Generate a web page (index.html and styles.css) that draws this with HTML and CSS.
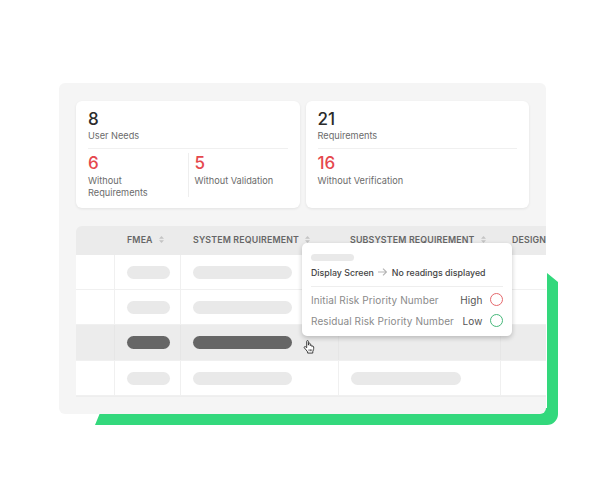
FILE: index.html
```html
<!DOCTYPE html>
<html lang="en">
<head>
    <meta charset="UTF-8">
    <title>Traceability</title>
    <link rel="stylesheet" href="styles.css">
</head>
<body>
    <div class="stage">
        <svg class="accent" width="463" height="153" viewBox="0 0 463 153">
            <path d="M452 0 L463 9 V141 A11 11 0 0 1 452 152 H0 L7 135 H452 Z" fill="#33d87c"/>
        </svg>

        <div class="panel">
            <div class="cards">
                <div class="card">
                    <div class="num">8</div>
                    <div class="label">User Needs</div>
                    <div class="split">
                        <div class="part part-first">
                            <div class="num red">6</div>
                            <div class="label">Without<br>Requirements</div>
                        </div>
                        <div class="part part-second">
                            <div class="num red">5</div>
                            <div class="label">Without Validation</div>
                        </div>
                    </div>
                </div>
                <div class="card">
                    <div class="num">21</div>
                    <div class="label">Requirements</div>
                    <div class="split">
                        <div class="part">
                            <div class="num red">16</div>
                            <div class="label">Without Verification</div>
                        </div>
                    </div>
                </div>
            </div>

            <div class="table">
                <div class="row head">
                    <div class="cell"></div>
                    <div class="cell">FMEA <svg class="sort" width="5" height="7" viewBox="0 0 5 7"><path d="M2.500 0 L5 2.700 H0 Z M2.500 7 L0 4.300 H5 Z"/></svg></div>
                    <div class="cell">SYSTEM REQUIREMENT <svg class="sort" width="5" height="7" viewBox="0 0 5 7"><path d="M2.500 0 L5 2.700 H0 Z M2.500 7 L0 4.300 H5 Z"/></svg></div>
                    <div class="cell">SUBSYSTEM REQUIREMENT <svg class="sort" width="5" height="7" viewBox="0 0 5 7"><path d="M2.500 0 L5 2.700 H0 Z M2.500 7 L0 4.300 H5 Z"/></svg></div>
                    <div class="cell">DESIGN</div>
                </div>
                <div class="row">
                    <div class="cell"></div>
                    <div class="cell"><span class="pill pill-short"></span></div>
                    <div class="cell"><span class="pill pill-long"></span></div>
                    <div class="cell"></div>
                    <div class="cell"></div>
                </div>
                <div class="row">
                    <div class="cell"></div>
                    <div class="cell"><span class="pill pill-short"></span></div>
                    <div class="cell"><span class="pill pill-long"></span></div>
                    <div class="cell"></div>
                    <div class="cell"></div>
                </div>
                <div class="row active">
                    <div class="cell"></div>
                    <div class="cell"><span class="pill pill-short"></span></div>
                    <div class="cell"><span class="pill pill-long"></span></div>
                    <div class="cell"></div>
                    <div class="cell"></div>
                </div>
                <div class="row">
                    <div class="cell"></div>
                    <div class="cell"><span class="pill pill-short"></span></div>
                    <div class="cell"><span class="pill pill-long"></span></div>
                    <div class="cell"><span class="pill pill-wide"></span></div>
                    <div class="cell"></div>
                </div>
            </div>

            <div class="tip">
                <div class="tip-bar"></div>
                <div class="tip-title">
                    <span>Display Screen</span>
                    <svg class="arrow" width="9" height="8" viewBox="0 0 9 8"><path d="M0 4 H8.500 M5 0.600 L8.500 4 L5 7.400" fill="none" stroke="#b5b5b5" stroke-width="1.200"/></svg>
                    <span>No readings displayed</span>
                </div>
                <div class="tip-line">
                    <span class="tip-name">Initial Risk Priority Number</span>
                    <span class="tip-value">High</span>
                    <span class="dot dot-red"></span>
                </div>
                <div class="tip-line">
                    <span class="tip-name">Residual Risk Priority Number</span>
                    <span class="tip-value">Low</span>
                    <span class="dot dot-green"></span>
                </div>
            </div>

            <svg class="hand" width="13" height="14" viewBox="0 0 13 15">
                <path d="M3.500 1.500 C3.500 0.300 5.300 0.300 5.300 1.500 V5.500 L5.700 3.800 C6.200 3 7.400 3.300 7.300 4.300 V6 C7.700 5 9 5.200 9 6.200 V7 C9.500 6.300 11 6.500 11 7.500 C11 9.500 11 11 10 12.500 V14 H4.500 V12.800 C3.500 11.500 2.500 10 1 8.500 C0.300 7.500 1.500 6.500 2.500 7.300 L3.500 8.300 Z" fill="#fff" stroke="#333" stroke-width="1"/>
                <path d="M6 10 V12 M7.500 10 V12 M9 10 V12" stroke="#333" stroke-width="0.800"/>
            </svg>
        </div>
    </div>
</body>
</html>
```

FILE: styles.css
```css
/* page */
body {
    margin: 0;
    background-color: #fff;
    font-family: Inter, "Liberation Sans", sans-serif;
    color: #666;
}

.stage {
    position: relative;
    width: 487px;
    height: 343px;
    margin: 83px 0 0 59px;
}

/* green shape behind the panel */
.accent {
    position: absolute;
    left: 36px;
    top: 190px;
    display: block;
}

/* grey panel */
.panel {
    position: relative;
    height: 331px;
    box-sizing: border-box;
    padding: 18px 0 0 17px;
    background-color: #f5f5f5;
    border-radius: 6px;
}

/* cards on top */
.cards {
    display: flex;
    gap: 6px;
    width: 453px;
}

.card {
    flex: 1;
    height: 107px;
    box-sizing: border-box;
    padding: 8px 12px 0;
    background-color: #fff;
    border-radius: 6px;
    box-shadow: 0 1px 3px rgba(0, 0, 0, 0.08);
}

.num {
    font-size: 17px;
    line-height: 20px;
    font-weight: 500;
    color: #2b2b2b;
}

.red {
    color: #e5484d;
}

.label {
    margin-top: 1px;
    font-size: 9.200px;
    line-height: 12px;
    color: #6b6b6b;
}

.split {
    display: flex;
    margin-top: 6px;
    border-top: 1px solid #f0f0f0;
}

.part {
    margin-top: 4px;
}

.part .label {
    margin-top: 2px;
}

.part-first {
    width: 100px;
    height: 44px;
    border-right: 1px solid #eee;
}

.part-second {
    padding-left: 5.500px;
}

/* table */
.table {
    width: 470px;
    margin-top: 18px;
    overflow: hidden;
    border-radius: 6px 0 0 0;
    border-bottom: 1px solid #eee;
}

.row {
    display: grid;
    grid-template-columns: 38px 66px 158px 162px 46px;
    height: 35px;
    background-color: #fff;
    border-bottom: 1px solid #f0f0f0;
    box-sizing: border-box;
}

.row.head {
    height: 29px;
    background-color: #ebebeb;
    border-bottom: 0;
}

.row.active {
    height: 36px;
    background-color: #ececec;
}

.cell {
    display: flex;
    align-items: center;
    padding-left: 12px;
    border-left: 1px solid #f0f0f0;
    white-space: nowrap;
}

.cell:first-child {
    border-left: 0;
}

.head .cell {
    border-left: 0;
    padding-left: 13px;
    padding-bottom: 2px;
    font-size: 8.800px;
    font-weight: 600;
    letter-spacing: 0.17px;
    color: #666;
}

.head .cell:nth-child(n+4) {
    padding-left: 12px;
}

.active .cell {
    border-left-color: #e6e6e6;
}

.sort {
    margin-left: 6px;
    fill: #c4c4c4;
}

.pill {
    display: block;
    height: 13px;
    border-radius: 7px;
    background-color: #e9e9e9;
}

.active .pill {
    background-color: #666;
}

.pill-short {
    width: 43px;
}

.pill-long {
    width: 99px;
}

.pill-wide {
    width: 110px;
}

/* tooltip over the table */
.tip {
    position: absolute;
    left: 243px;
    top: 160px;
    width: 210px;
    height: 93px;
    box-sizing: border-box;
    padding: 11px 9px 0;
    background-color: #fff;
    border-radius: 5px;
    box-shadow: 0 2px 5px rgba(0, 0, 0, 0.22);
}

.tip-bar {
    width: 43px;
    height: 7px;
    border-radius: 4px;
    background-color: #e9e9e9;
}

.tip-title {
    display: flex;
    align-items: center;
    gap: 4.500px;
    height: 16px;
    margin-top: 3px;
    padding-bottom: 6px;
    border-bottom: 1px solid #eee;
    font-size: 8.800px;
    font-weight: 500;
    color: #444;
}

.tip-line {
    display: flex;
    align-items: center;
    height: 21px;
    font-size: 10px;
    letter-spacing: 0.1px;
    white-space: nowrap;
}

.tip-title + .tip-line {
    margin-top: 2px;
}

.tip-name {
    flex: 1;
    color: #8a8a8a;
}

.tip-value {
    margin-right: 7px;
    color: #555;
}

.dot {
    width: 13.500px;
    height: 13.500px;
    box-sizing: border-box;
    border-radius: 50%;
    border: 1.400px solid;
}

.dot-red {
    border-color: #e5686c;
}

.dot-green {
    border-color: #46b87a;
}

.hand {
    position: absolute;
    left: 244px;
    top: 257px;
}
```
